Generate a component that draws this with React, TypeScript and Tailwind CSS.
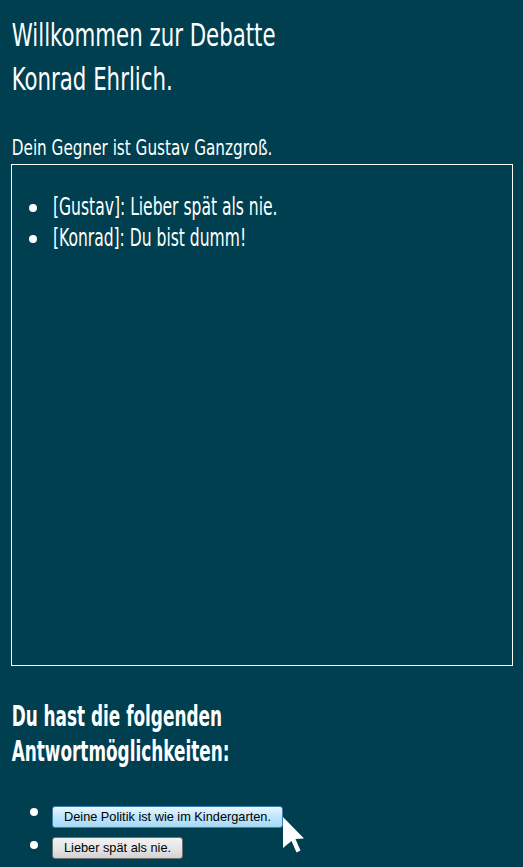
import React from 'react';

const narrow = "font-['DejaVu_Sans_Condensed','Liberation_Sans_Narrow',sans-serif]";
const btnFont = "font-['Liberation_Sans',Arial,sans-serif]";

const Cursor: React.FC = () => (
  <svg width="24" height="38" viewBox="0 0 24 38" className="absolute left-full top-[13px] pointer-events-none">
    <polygon points="0,0 21,21.5 12.5,22 17.5,33.5 13.5,35.5 8.5,24 0,31" fill="#ffffff" />
  </svg>
);

const App: React.FC = () => {
  const messages = ['[Gustav]: Lieber spät als nie.', '[Konrad]: Du bist dumm!'];

  return (
    <div className={`min-h-screen bg-[#003f4f] pl-[11px] pt-[13px] pb-[8px] text-white ${narrow}`}>
      <h1 className="text-[32px] leading-[44px] pl-[1px] scale-x-[0.74] origin-left">
        Willkommen zur Debatte
        <br />
        Konrad Ehrlich.
      </h1>
      <p className="mt-[34px] text-[22px] leading-[26px] pl-[1px] scale-x-[0.77] origin-left">
        Dein Gegner ist Gustav Ganzgroß.
      </p>

      <div className="mt-[3px] w-[502px] h-[502px] border border-white pt-[27px]">
        <ul className="flex flex-col">
          {messages.map((m, i) => (
            <li key={i} className="flex items-center text-[24px] leading-[31px]">
              <span className="ml-[17px] w-[8px] h-[8px] rounded-full bg-white shrink-0" />
              <span className="ml-[16px] whitespace-nowrap scale-x-[0.72] origin-left">{m}</span>
            </li>
          ))}
        </ul>
      </div>

      <h2 className="mt-[33px] text-[28px] font-bold leading-[35px] pl-[1px] scale-x-[0.67] origin-left">
        Du hast die folgenden
        <br />
        Antwortmöglichkeiten:
      </h2>

      <ul className="mt-[35px] flex flex-col gap-[9px]">
        <li className="flex items-start">
          <span className="ml-[19px] mt-[4px] w-[8px] h-[8px] rounded-full bg-white shrink-0" />
          <div className="relative ml-[14px]">
            <button className={`h-[22px] px-[11px] rounded-[3px] border border-[#3c7fb1] bg-gradient-to-b from-[#eaf6fd] via-[#bee6fd] to-[#a7d9f5] text-black text-[12.75px] leading-none ${btnFont}`}>
              Deine Politik ist wie im Kindergarten.
            </button>
            <Cursor />
          </div>
        </li>
        <li className="flex items-start">
          <span className="ml-[19px] mt-[4px] w-[8px] h-[8px] rounded-full bg-white shrink-0" />
          <button className={`ml-[14px] h-[22px] px-[11px] rounded-[3px] border border-[#707070] bg-gradient-to-b from-[#f2f2f2] via-[#e6e6e6] to-[#d2d2d2] text-black text-[12.75px] leading-none ${btnFont}`}>
            Lieber spät als nie.
          </button>
        </li>
      </ul>
    </div>
  );
};

export default App;
